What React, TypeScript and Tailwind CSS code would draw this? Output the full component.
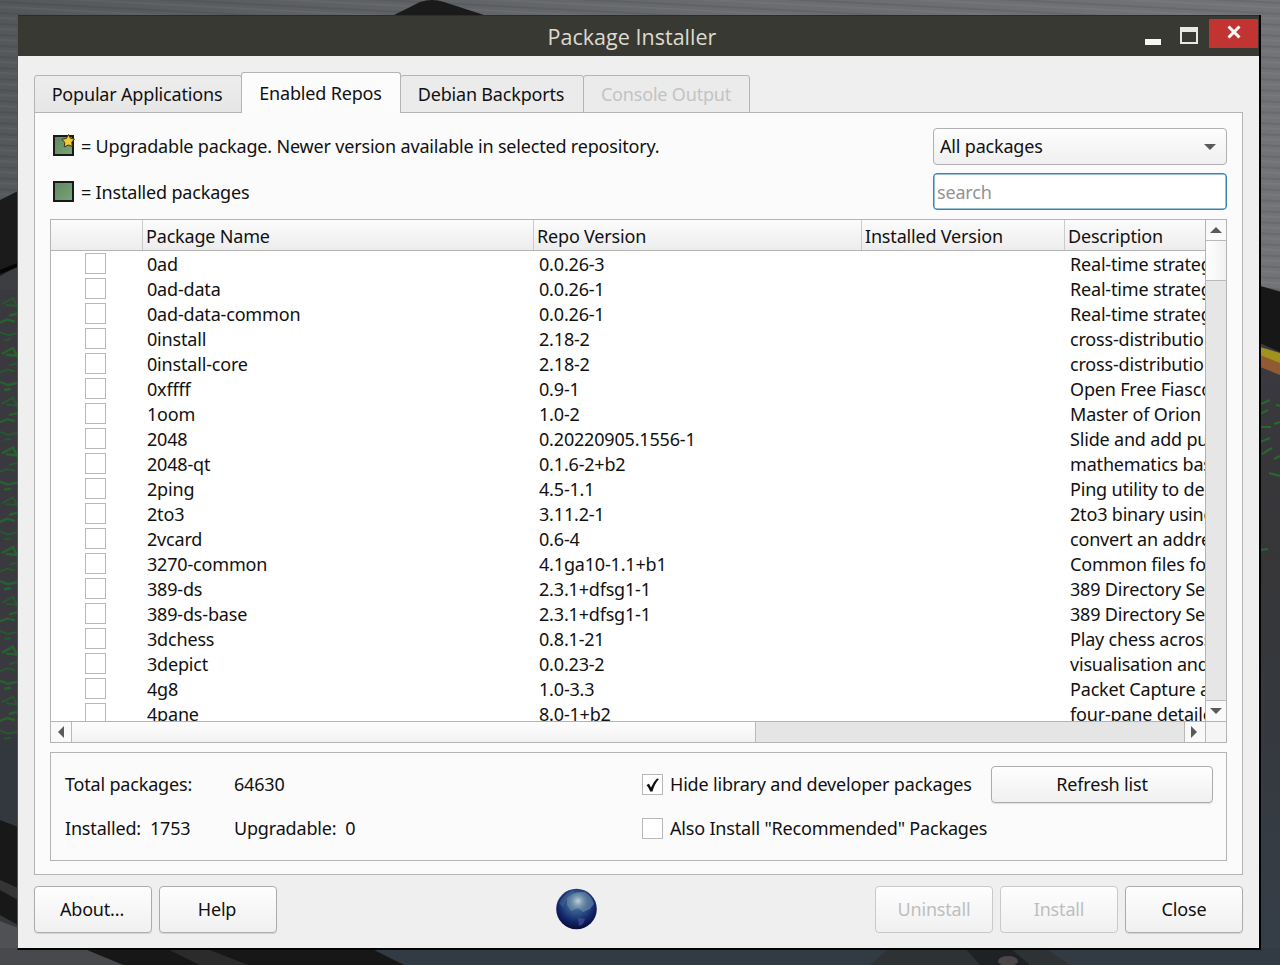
import React from "react";

const packages: [string, string, string][] = [
  ["0ad", "0.0.26-3", "Real-time strateg"],
  ["0ad-data", "0.0.26-1", "Real-time strateg"],
  ["0ad-data-common", "0.0.26-1", "Real-time strateg"],
  ["0install", "2.18-2", "cross-distributio"],
  ["0install-core", "2.18-2", "cross-distributio"],
  ["0xffff", "0.9-1", "Open Free Fiasco"],
  ["1oom", "1.0-2", "Master of Orion"],
  ["2048", "0.20220905.1556-1", "Slide and add pu"],
  ["2048-qt", "0.1.6-2+b2", "mathematics bas"],
  ["2ping", "4.5-1.1", "Ping utility to de"],
  ["2to3", "3.11.2-1", "2to3 binary using"],
  ["2vcard", "0.6-4", "convert an addre"],
  ["3270-common", "4.1ga10-1.1+b1", "Common files fo"],
  ["389-ds", "2.3.1+dfsg1-1", "389 Directory Se"],
  ["389-ds-base", "2.3.1+dfsg1-1", "389 Directory Se"],
  ["3dchess", "0.8.1-21", "Play chess across"],
  ["3depict", "0.0.23-2", "visualisation and"],
  ["4g8", "1.0-3.3", "Packet Capture a"],
  ["4pane", "8.0-1+b2", "four-pane detaile"],
];

function Wallpaper() {
  const left = Array.from({ length: 27 }, (_, i) => 298 + i * 16.6);
  return (
    <svg className="absolute inset-0" width="1280" height="965" viewBox="0 0 1280 965">
      <defs>
        <linearGradient id="metal" x1="0" x2="1" y1="0" y2="0">
          <stop offset="0" stopColor="#55585b" />
          <stop offset="0.6" stopColor="#6a6c70" />
          <stop offset="1" stopColor="#717376" />
        </linearGradient>
        <linearGradient id="right" x1="0" x2="0" y1="0" y2="1">
          <stop offset="0" stopColor="#3a3a42" />
          <stop offset="0.4" stopColor="#363638" />
          <stop offset="1" stopColor="#353e48" />
        </linearGradient>
        <pattern id="brush" width="300" height="11" patternUnits="userSpaceOnUse" patternTransform="rotate(3)">
          <rect y="1" width="300" height="2" fill="#000" opacity="0.08" />
          <rect y="6" width="300" height="1.5" fill="#fff" opacity="0.05" />
        </pattern>
      </defs>
      <rect width="1280" height="965" fill="#36373c" />
      <rect width="1280" height="300" fill="url(#metal)" />
      <rect width="1280" height="300" fill="url(#brush)" />
      <path d="M394 15 L420 2 Q432 -2 444 2 L484 15Z" fill="#1a1a1a" />
      <path d="M0 200 L20 190 V300 H0Z" fill="#1b1b1b" />
      <path d="M0 276 L20 265 V300 H0Z" fill="#3d3e41" />
      <path d="M0 272 L20 264" stroke="#050505" strokeWidth="4" />
      <rect y="290" width="18" height="450" fill="#3a393f" />
      <path d="M0 735 H18 V828 L0 820Z" fill="#33383f" />
      <path d="M0 820 L18 827 V925 L0 915Z" fill="#181818" />
      <path d="M0 880 L18 888 V900 L0 890Z" fill="#353535" />
      <path d="M0 921 L18 928 V965 H0Z" fill="#505154" />
      {left.map((y, i) => (
        <path
          key={y}
          d={
            i % 3 === 0
              ? `M2 ${y + 6} L13 ${y} L17 ${y + 8} L6 ${y + 7}`
              : i % 3 === 1
                ? `M0 ${y + 8} L7 ${y + 5} L15 ${y + 7} M9 ${y + 1} L17 ${y - 1}`
                : `M0 ${y + 1} L8 ${y + 4} L17 ${y + 2} M4 ${y + 9} L11 ${y + 8}`
          }
          fill="none"
          stroke={i % 2 ? "#27612f" : "#245a2e"}
          strokeWidth={i % 2 ? 2.4 : 1.8}
        />
      ))}
      <path d="M1260 286 L1280 291 V965 H1260Z" fill="url(#right)" />
      <path d="M1260 286 L1280 292 V352 L1260 343Z" fill="#171717" />
      <path d="M1260 347 L1280 353 V364 L1260 357Z" fill="#a0921c" />
      <path d="M1260 355 L1280 363 V375 L1260 367Z" fill="#925a32" />
      <path
        d="M1261 404 L1270 400 M1260 414 L1268 410 M1261 427 H1271 M1274 424 L1280 422 M1260 442 L1270 438 M1262 454 L1272 448 M1269 473 L1280 476 M1276 405 L1280 406 M1274 459 L1280 456 M1260 550 L1268 549"
        stroke="#27682f"
        strokeWidth="2.2"
        fill="none"
      />
      <rect y="948" width="1280" height="17" fill="#323a43" />
      <path d="M0 948 H84 L122 965 H0Z" fill="#48494c" />
      <path d="M82 948 H370 L404 965 H124Z" fill="#171717" />
      <path d="M165 948 H205 L248 965 H200Z" fill="#2b2b2b" />
      <path d="M890 948 H1045 L1070 965 H870Z" fill="#2d3234" />
      <path d="M965 948 H1010 L1030 965 H980Z" fill="#1f2225" />
      <ellipse cx="1008" cy="961" rx="10" ry="5" fill="#4b4548" />
    </svg>
  );
}

function Tri({ dir }: { dir: "up" | "down" | "left" | "right" }) {
  const d = {
    up: "M0 6 L6 0 L12 6Z",
    down: "M0 0 H12 L6 6Z",
    left: "M6 0 V12 L0 6Z",
    right: "M0 0 V12 L6 6Z",
  }[dir];
  const v = dir === "up" || dir === "down";
  return (
    <svg width={v ? 12 : 6} height={v ? 6 : 12} className="shrink-0">
      <path d={d} fill="#5a5a5a" />
    </svg>
  );
}

function Box({ checked = false }: { checked?: boolean }) {
  return (
    <span className="flex size-[21px] shrink-0 items-center justify-center border border-[#b8b8b8] bg-white">
      {checked && (
        <svg width="15" height="16" viewBox="0 0 15 16">
          <path d="M1.5 8 L4 6.8 L6 10.5 Q8.5 4.5 12 1.5 L14 2 Q9.5 7 7.5 14.5 H5.2 Q3.6 10.5 1.5 8Z" fill="#111" />
        </svg>
      )}
    </span>
  );
}

function Square({ star = false }: { star?: boolean }) {
  return (
    <svg width="22" height="24" viewBox="0 0 22 24" className="shrink-0">
      <defs>
        <linearGradient id="green" x1="0" y1="0" x2="1" y2="1">
          <stop offset="0" stopColor="#5f8760" />
          <stop offset="1" stopColor="#7ba479" />
        </linearGradient>
      </defs>
      <rect x="1" y="2" width="19" height="19" fill="url(#green)" stroke="#171b17" strokeWidth="2" />
      {star && (
        <path
          d="M15.4 0.5 L17.4 4.3 L21.5 5.1 L18.8 8.1 L19.3 12.5 L15.4 11 L11.2 12.9 L11.8 8.5 L8.9 5.3 L13.3 4.5Z"
          fill="#f3cb35"
          stroke="#3a3313"
          strokeWidth="1"
        />
      )}
    </svg>
  );
}

function Btn({ children, w, disabled }: { children: React.ReactNode; w: string; disabled?: boolean }) {
  return (
    <button
      className={`${w} rounded-[4px] border bg-linear-to-b from-[#fefefe] to-[#f0f0f0] tracking-[-0.18px] ${
        disabled ? "border-[#c9c9c9] text-[#bebebe]" : "border-[#acacac] text-[#111] shadow-[0_1px_1px_#0000001c]"
      }`}
    >
      {children}
    </button>
  );
}

function Globe() {
  return (
    <svg width="42" height="42" viewBox="0 0 42 42">
      <defs>
        <radialGradient id="globe" cx="0.5" cy="0.36" r="0.64">
          <stop offset="0" stopColor="#51749e" />
          <stop offset="0.4" stopColor="#2f5389" />
          <stop offset="0.72" stopColor="#122468" />
          <stop offset="1" stopColor="#070d38" />
        </radialGradient>
        <radialGradient id="glint">
          <stop offset="0" stopColor="#d5e1e8" stopOpacity="0.85" />
          <stop offset="1" stopColor="#7895ab" stopOpacity="0" />
        </radialGradient>
      </defs>
      <circle cx="20.5" cy="21" r="20.3" fill="url(#globe)" />
      <path d="M11 10 Q17 3 29 4 Q36 8 38 16 L34 21 L27 24 L22 20 L15 23 L11 17Z" fill="#7c9bae" opacity="0.5" />
      <path d="M3 15 Q9 4 19 2 L15 9 L10 13 L7 20Z" fill="#557a97" opacity="0.35" />
      <path d="M22 30 L29 31 L27 36 L23 38Z" fill="#525999" opacity="0.6" />
      <circle cx="22" cy="13" r="10" fill="url(#glint)" />
    </svg>
  );
}

const grid = "grid grid-cols-[92px_391px_328px_203px_140px]";

export default function App() {
  return (
    <div className="relative h-[965px] w-[1280px] overflow-hidden pt-[15px] pl-[17px] font-['Noto_Sans',sans-serif] text-[18px] leading-[25px] tracking-[-0.18px] text-[#111]">
      <Wallpaper />
      <div className="relative flex h-[935px] w-[1244px] flex-col border-r-2 border-b-2 border-l border-r-black border-b-black border-l-[#55554f] bg-[#efefef]">
        <header className="flex h-[41px] shrink-0 items-start border-t border-[#2c2c29] bg-[#393933] pr-px">
          <h1 className="flex-1 pt-[8px] pl-[101px] text-center font-['Open_Sans',sans-serif] text-[21.5px] tracking-[0.02px] text-[#dedbd0]">Package Installer</h1>
          <svg width="64" height="39" viewBox="0 0 64 39">
            <rect x="0" y="23" width="16" height="6" fill="#f6f6f6" />
            <path fillRule="evenodd" d="M35 11 H53 V28 H35Z M37 16 H51 V26 H37Z" fill="#e8e8e4" />
          </svg>
          <span className="mt-[3px] flex h-[29px] w-[49px] items-center justify-center bg-[#c23431]">
            <svg width="14" height="14" viewBox="0 0 14 14" className="mb-[3px] ml-px">
              <path d="M1.5 1.5 L12.5 12.5 M12.5 1.5 L1.5 12.5" stroke="#fff" strokeWidth="3" />
            </svg>
          </span>
        </header>

        <main className="flex flex-1 flex-col px-[16px] pt-[16px]">
          <nav className="relative z-10 -mb-px flex h-[41px] items-end">
            <div className="flex h-[38px] w-[208px] items-center justify-center rounded-t-[3px] border border-[#b4b4b4] bg-linear-to-b from-[#ededed] to-[#e6e6e6] pt-px pr-[2px]">Popular Applications</div>
            <div className="-ml-px flex h-[41px] w-[160px] items-center justify-center rounded-t-[3px] border border-b-0 border-[#b4b4b4] bg-[#fcfcfc] pr-px">Enabled Repos</div>
            <div className="-ml-px flex h-[38px] w-[184px] items-center justify-center rounded-t-[3px] border border-[#b4b4b4] bg-[#ebebeb] pt-px pr-[2px]">Debian Backports</div>
            <div className="-ml-px flex h-[38px] w-[167px] items-center justify-center rounded-t-[3px] border border-[#b4b4b4] bg-[#ebebeb] pt-px pr-px text-[#c3c3c3]">Console Output</div>
          </nav>

          <section className="h-[763px] shrink-0 border border-[#b4b4b4] bg-[#fbfbfb] px-[15px] pt-[15px]">
            <div className="flex h-[82px] justify-between pl-[3px]">
              <div>
                <div className="flex h-[36px] items-center gap-[6px]"><Square star /><span>= Upgradable package. Newer version available in selected repository.</span></div>
                <div className="mt-[10px] flex h-[36px] items-center gap-[6px]"><Square /><span>= Installed packages</span></div>
              </div>
              <div className="w-[294px]">
                <div className="flex h-[37px] items-center justify-between rounded-[4px] border border-[#b0b0b0] bg-linear-to-b from-[#fdfdfd] to-[#f0f0f0] pr-[10px] pl-[6px]"><span>All packages</span><Tri dir="down" /></div>
                <input placeholder="search" className="mt-[8px] block h-[37px] w-full rounded-[4px] border-[1.5px] border-[#3484b0] bg-white px-[3px] tracking-[-0.18px] shadow-[inset_0_0_0_0.5px_#3484b0] outline-none placeholder:text-[#929292]" />
              </div>
            </div>

            <div className="mt-[9px] flex h-[524px] flex-col border border-[#b4b4b4] bg-white">
              <div className="flex h-[501px]">
                <div className="w-[1154px] overflow-hidden">
                  <div className={`${grid} h-[31px] border-b border-[#b4b4b4] bg-linear-to-b from-[#fcfcfc] to-[#ededed]`}>
                    <span className="border-r border-[#cbcbcb]" />
                    <span className="border-r border-[#cbcbcb] pt-[4px] pl-[3px]">Package Name</span>
                    <span className="border-r border-[#cbcbcb] pt-[4px] pl-[3px]">Repo Version</span>
                    <span className="border-r border-[#cbcbcb] pt-[4px] pl-[3px]">Installed Version</span>
                    <span className="pt-[4px] pl-[3px]">Description</span>
                  </div>
                  {packages.map(([name, version, description]) => (
                    <div key={name} className={`${grid} h-[25px] items-start whitespace-nowrap`}>
                      <span className="pt-[2px] pl-[34px]"><Box /></span>
                      <span className="pt-px pl-[4px]">{name}</span>
                      <span className="pt-px pl-[5px]">{version}</span>
                      <span />
                      <span className="pt-px pl-[5px]">{description}</span>
                    </div>
                  ))}
                </div>
                <div className="flex w-[21px] flex-col border-l border-[#b4b4b4] bg-[#e6e6e6]">
                  <span className="flex h-[21px] items-center justify-center border-b border-[#b9b9b9] bg-[#f9f9f9]"><Tri dir="up" /></span>
                  <span className="h-[40px] border-b border-[#b9b9b9] bg-linear-to-r from-white to-[#f1f1f1]" />
                  <span className="flex-1" />
                  <span className="flex h-[21px] items-center justify-center border-t border-[#b9b9b9] bg-[#f9f9f9]"><Tri dir="down" /></span>
                </div>
              </div>
              <div className="flex h-[21px] border-t border-[#b4b4b4] bg-[#e5e5e5]">
                <span className="flex w-[21px] items-center justify-center border-r border-[#b9b9b9] bg-[#f9f9f9] pr-px"><Tri dir="left" /></span>
                <span className="w-[684px] border-r border-[#b9b9b9] bg-linear-to-b from-[#fdfdfd] to-[#f2f2f2]" />
                <span className="flex-1" />
                <span className="flex w-[21px] items-center justify-center border-l border-[#b9b9b9] bg-[#f9f9f9] pr-[2px]"><Tri dir="right" /></span>
                <span className="w-[21px] border-l border-[#b9b9b9] bg-[#f5f5f5]" />
              </div>
            </div>

            <div className="mt-[9px] flex h-[109px] border border-[#b4b4b4] pt-[13px] pr-[13px] pl-[14px]">
              <div className="w-[169px] shrink-0 pt-[6px]"><div>Total packages:</div><div className="mt-[19px]">Installed:&nbsp; 1753</div></div>
              <div className="w-[408px] shrink-0 pt-[6px]"><div>64630</div><div className="mt-[19px]">Upgradable:&nbsp; 0</div></div>
              <div className="flex-1 whitespace-nowrap pt-[6px]">
                <label className="flex h-[25px] items-center gap-[7px]"><Box checked />Hide library and developer packages</label>
                <label className="mt-[19px] flex h-[25px] items-center gap-[7px]"><Box />Also Install "Recommended" Packages</label>
              </div>
              <div className="flex h-[37px] shrink-0"><Btn w="w-[222px]">Refresh list</Btn></div>
            </div>
          </section>

          <footer className="mt-[11px] flex h-[47px] items-stretch">
            <Btn w="w-[118px] pr-[2px]">About...</Btn>
            <Btn w="ml-[7px] w-[118px] pr-[2px]">Help</Btn>
            <div className="ml-[279px] pt-[2px]"><Globe /></div>
            <Btn w="ml-auto w-[118px]" disabled>Uninstall</Btn>
            <Btn w="ml-[7px] w-[118px]" disabled>Install</Btn>
            <Btn w="ml-[7px] w-[118px]">Close</Btn>
          </footer>
        </main>
      </div>
    </div>
  );
}
